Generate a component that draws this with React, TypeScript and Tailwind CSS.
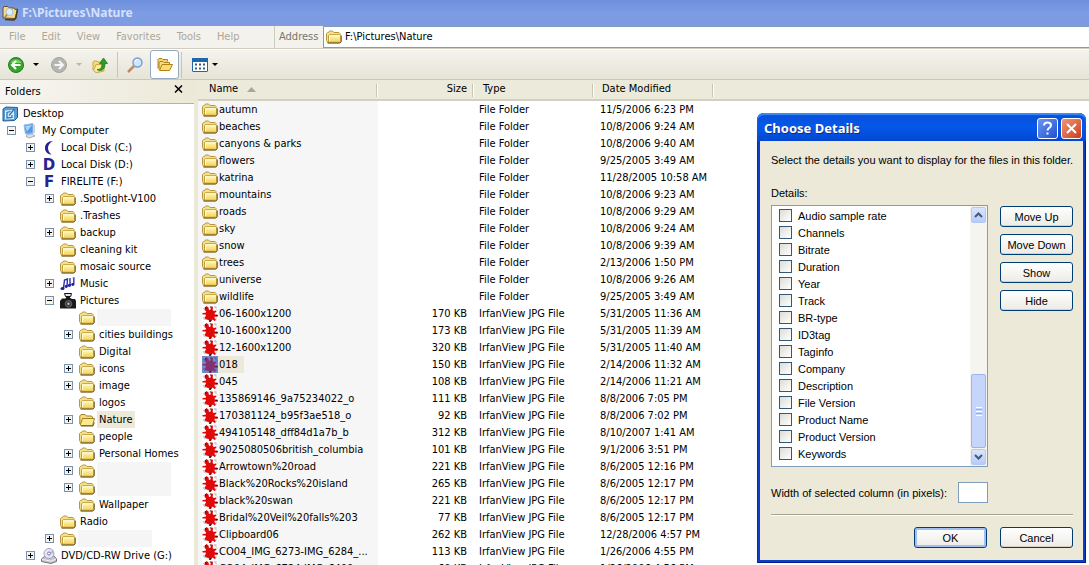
import React from 'react';

interface FileRow {
  name: string;
  size?: string;
  date: string;
  selected?: boolean;
}

interface TreeNode {
  label?: string;
  icon: React.ReactNode;
  state?: 'open' | 'closed';
  selected?: boolean;
  children?: TreeNode[];
}

const FolderIcon = () => (
  <svg width="16" height="16" viewBox="0 0 16 16" className="shrink-0" aria-hidden="true">
    <defs>
      <linearGradient id="folderFill" x1="0" y1="0" x2="0" y2="1">
        <stop offset="0" stopColor="#fffbb8" />
        <stop offset="1" stopColor="#f5d05a" />
      </linearGradient>
    </defs>
    <path d="M.5 11.5v-7l1-1h1l1-1.500h3l1.500 1.500h5l1 1v2l.5.500v6l-1.500 1h-11z" fill="#f3e08c" stroke="#b8963c" />
    <path d="M2.500 13V6.500l.8-.8h10.400l.8.800V12.500l-.8.800H2.500z" fill="url(#folderFill)" stroke="#c09c3a" />
    <path d="M1.500 14h12.500l1.300-1.200V6.500" fill="none" stroke="#75602a" />
    <path d="M3.500 12V6.800h10" fill="none" stroke="#fffde0" />
  </svg>
);

const OpenFolderIcon = () => (
  <svg width="16" height="16" viewBox="0 0 16 16" className="shrink-0" aria-hidden="true">
    <path d="M.8 12V4L2 2.500h4L7.500 4h5l1 1v3" fill="#f4dc7e" stroke="#a37f22" />
    <path d="M1.200 13L3.500 6.500h12L13.500 13.500H2z" fill="#fbe98f" stroke="#a37f22" />
    <path d="M2 14h12l1.300-3.500" fill="none" stroke="#6f5a23" />
  </svg>
);

const SplatIcon = ({ selected }: { selected?: boolean }) => (
  <svg width="16" height="17" viewBox="0 0 16 17" className={selected ? 'shrink-0 bg-[#7389c8]' : 'shrink-0 bg-white'} aria-hidden="true">
    <path d="M12 2h2v2M1 4l1.500-1M1 12l2 3M2 14h2M12 14.500h2v-2M14.500 5h1" fill="none" stroke={selected ? '#566bb0' : '#c9c9cc'} strokeWidth="1.300" />
    <path
      d="M3 2.500L4.500 1l2 1.500.5 2.500 1.500-.5.500-3 2 .2-.3 3.300 1 1 2.300-.5.500 1.500-2 1 .5 1.500 3 .5-.2 1.500-3.300.3.200 1.700 1.300 1.500-1.500 1-2-1.500-1.500 2-.3 1.500-1.700-.2-.2-2.800-1.600-.3L3.500 14l-1-1.200 1.500-2.300-.5-1L.5 9.500V8l3-.2.700-1.300L2.500 5z"
      fill={selected ? '#84316f' : '#e10a0a'}
    />
    <path d="M3 2.500l1.500 1M8.500 1.500v1M13.500 10.500h2M8.500 15v1.500" stroke={selected ? '#4a2458' : '#5a0808'} strokeWidth="1.400" />
  </svg>
);

const DesktopIcon = () => (
  <svg width="16" height="16" viewBox="0 0 16 16" className="shrink-0" aria-hidden="true">
    <path d="M1 3l3-2 11.500.5v10l-3 3-11.500.5z" fill="#5a9dd2" stroke="#1f5c94" />
    <path d="M3 4.500l9-.5v9L3 13.500z" fill="#d8edfb" />
    <path d="M8.500 5.500L5 6.500V12l5-.5V9M7 9.500L12.500 3" fill="none" stroke="#2d74b4" strokeWidth="1.300" />
  </svg>
);

const ComputerIcon = () => (
  <svg width="16" height="16" viewBox="0 0 16 16" className="shrink-0" aria-hidden="true">
    <path d="M2 2l9-1.500V10l-7.500 1z" fill="#4f9bea" stroke="#9cbde3" />
    <path d="M3 3l7-1-5 6.500z" fill="#a5d4fb" />
    <path d="M11.500 1l1.500 1v8l-1.500 1z" fill="#c9cfd8" />
    <path d="M5 11.500l5-.7 3 2.200-6 2-3-1.500z" fill="#dbe0e8" stroke="#8791a5" strokeWidth=".7" />
  </svg>
);

const CrescentIcon = () => (
  <svg width="16" height="16" viewBox="0 0 16 16" className="shrink-0" aria-hidden="true">
    <path d="M12 1C7 1 4 4 4 8s3 6.500 6.500 6.500C8.500 13 7 11 7 8s2-5.500 5-7z" fill="#2a2290" />
  </svg>
);

const DriveLetter = ({ letter }: { letter: string }) => (
  <span className="w-4 shrink-0 text-center font-['DejaVu_Sans',sans-serif] text-[15px] leading-4 font-bold text-[#2a2290]">{letter}</span>
);

const MusicIcon = () => (
  <svg width="16" height="16" viewBox="0 0 16 16" className="shrink-0" aria-hidden="true">
    <path d="M3.500 12l1-8 3-1-.5 7M10 9V2M13.800 8V1.500" fill="none" stroke="#2a2ea8" strokeWidth="1.400" />
    <path d="M9 2.500h2M12.500 2h2" stroke="#6d70d0" />
    <g fill="#1d1f9b">
      <ellipse cx="2.500" cy="12.500" rx="2" ry="1.600" />
      <ellipse cx="6.200" cy="10.500" rx="1.600" ry="1.400" />
      <ellipse cx="9.400" cy="9.500" rx="1.600" ry="1.400" />
      <ellipse cx="12.800" cy="8.500" rx="1.600" ry="1.400" />
    </g>
  </svg>
);

const CameraIcon = () => (
  <svg width="16" height="16" viewBox="0 0 16 16" className="shrink-0" aria-hidden="true">
    <path d="M4.500.5h7l-.8 3H5.500z" fill="#dfe5ea" stroke="#111" />
    <path d="M6 3.500h4V6H6z" fill="#1a1a1a" />
    <path d="M0 8l2-2.500h3L6.500 5h4l1.500 1h3l1 2V15.500H0z" fill="#1a1a1a" />
    <circle cx="8.500" cy="10.800" r="3.300" fill="#3c3c3c" stroke="#777" strokeWidth=".8" />
    <circle cx="8.500" cy="10.800" r="1.200" fill="#b9c0c6" />
  </svg>
);

const DiscIcon = () => (
  <svg width="16" height="16" viewBox="0 0 16 16" className="shrink-0" aria-hidden="true">
    <path d="M.5 11L4 8h9l2.500 3v2.500L10 15.500l-9.500-2z" fill="#c2c5cc" stroke="#70757f" />
    <path d="M1 11.500l9 1.500 5-2" fill="none" stroke="#f1f2f5" />
    <circle cx="8" cy="5.500" r="5" fill="#e6e6f6" stroke="#a3a3bd" />
    <path d="M8 5.500l3.500-3.500A5 5 0 0 1 13 5.500z" fill="#b8b4ee" />
    <circle cx="8" cy="5.500" r="1.500" fill="#fff" stroke="#7777a8" />
  </svg>
);

const ControlPanelIcon = () => (
  <svg width="16" height="16" viewBox="0 0 16 16" className="shrink-0" aria-hidden="true">
    <path d="M1 1l9-.5V11l-8 1z" fill="#3b87d6" stroke="#2763a5" />
  </svg>
);

const Caret = ({ muted }: { muted?: boolean }) => (
  <svg width="6" height="3" viewBox="0 0 6 3" className="shrink-0" aria-hidden="true">
    <path d="M0 0h6L3 3z" fill={muted ? '#b9b7ab' : '#000'} />
  </svg>
);

const folder = (label?: string, state?: 'open' | 'closed'): TreeNode => ({ label, state, icon: <FolderIcon /> });

const tree: TreeNode[] = [
  {
    label: 'My Computer',
    icon: <ComputerIcon />,
    state: 'open',
    children: [
      { label: 'Local Disk (C:)', icon: <CrescentIcon />, state: 'closed' },
      { label: 'Local Disk (D:)', icon: <DriveLetter letter="D" />, state: 'closed' },
      {
        label: 'FIRELITE (F:)',
        icon: <DriveLetter letter="F" />,
        state: 'open',
        children: [
          folder('.Spotlight-V100', 'closed'),
          folder('.Trashes'),
          folder('backup', 'closed'),
          folder('cleaning kit'),
          folder('mosaic source'),
          { label: 'Music', icon: <MusicIcon />, state: 'closed' },
          {
            label: 'Pictures',
            icon: <CameraIcon />,
            state: 'open',
            children: [
              folder(),
              folder('cities buildings', 'closed'),
              folder('Digital'),
              folder('icons', 'closed'),
              folder('image', 'closed'),
              folder('logos'),
              { label: 'Nature', icon: <OpenFolderIcon />, state: 'closed', selected: true },
              folder('people'),
              folder('Personal Homes', 'closed'),
              folder(undefined, 'closed'),
              folder(undefined, 'closed'),
              folder('Wallpaper'),
            ],
          },
          folder('Radio'),
          folder(undefined, 'closed'),
        ],
      },
      { label: 'DVD/CD-RW Drive (G:)', icon: <DiscIcon />, state: 'closed' },
      { label: 'Control Panel', icon: <ControlPanelIcon />, state: 'closed' },
    ],
  },
];

const files: FileRow[] = [
  { name: 'autumn', date: '11/5/2006 6:23 PM' },
  { name: 'beaches', date: '10/8/2006 9:24 AM' },
  { name: 'canyons & parks', date: '10/8/2006 9:40 AM' },
  { name: 'flowers', date: '9/25/2005 3:49 AM' },
  { name: 'katrina', date: '11/28/2005 10:58 AM' },
  { name: 'mountains', date: '10/8/2006 9:23 AM' },
  { name: 'roads', date: '10/8/2006 9:29 AM' },
  { name: 'sky', date: '10/8/2006 9:24 AM' },
  { name: 'snow', date: '10/8/2006 9:39 AM' },
  { name: 'trees', date: '2/13/2006 1:50 PM' },
  { name: 'universe', date: '10/8/2006 9:26 AM' },
  { name: 'wildlife', date: '9/25/2005 3:49 AM' },
  { name: '06-1600x1200', size: '170 KB', date: '5/31/2005 11:36 AM' },
  { name: '10-1600x1200', size: '173 KB', date: '5/31/2005 11:39 AM' },
  { name: '12-1600x1200', size: '320 KB', date: '5/31/2005 11:40 AM' },
  { name: '018', size: '150 KB', date: '2/14/2006 11:32 AM', selected: true },
  { name: '045', size: '108 KB', date: '2/14/2006 11:21 AM' },
  { name: '135869146_9a75234022_o', size: '111 KB', date: '8/8/2006 7:05 PM' },
  { name: '170381124_b95f3ae518_o', size: '92 KB', date: '8/8/2006 7:02 PM' },
  { name: '494105148_dff84d1a7b_b', size: '312 KB', date: '8/10/2007 1:41 AM' },
  { name: '9025080506british_columbia', size: '101 KB', date: '9/1/2006 3:51 PM' },
  { name: 'Arrowtown%20road', size: '221 KB', date: '8/6/2005 12:16 PM' },
  { name: 'Black%20Rocks%20island', size: '265 KB', date: '8/6/2005 12:17 PM' },
  { name: 'black%20swan', size: '221 KB', date: '8/6/2005 12:17 PM' },
  { name: 'Bridal%20Veil%20falls%203', size: '77 KB', date: '8/6/2005 12:17 PM' },
  { name: 'Clipboard06', size: '262 KB', date: '12/28/2006 4:57 PM' },
  { name: 'CO04_IMG_6273-IMG_6284_...', size: '113 KB', date: '1/26/2006 4:55 PM' },
  { name: 'CO04_IMG_6724-IMG_6400...', size: '60 KB', date: '1/26/2006 4:56 PM' },
];

const details = [
  'Audio sample rate', 'Channels', 'Bitrate', 'Duration', 'Year', 'Track', 'BR-type', 'ID3tag',
  'Taginfo', 'Company', 'Description', 'File Version', 'Product Name', 'Product Version', 'Keywords',
];

const menus = ['File', 'Edit', 'View', 'Favorites', 'Tools', 'Help'];

const Expander = ({ state }: { state: 'open' | 'closed' }) => (
  <button aria-label={state === 'open' ? 'Collapse' : 'Expand'} className="block size-[9px]">
    <svg width="9" height="9" viewBox="0 0 9 9" shapeRendering="crispEdges">
      <rect x=".5" y=".5" width="8" height="8" fill="#f3f2ee" stroke="#7b92ad" />
      <path d={state === 'open' ? 'M2 4.5h5' : 'M2 4.5h5M4.5 2v5'} stroke="#000" />
    </svg>
  </button>
);

const TreeList = ({ nodes }: { nodes: TreeNode[] }) => (
  <ul>
    {nodes.map((node, i) => (
      <li key={i}>
        <div className="flex h-[17px] items-center">
          <span className="mr-[6px] w-[9px] shrink-0">{node.state && <Expander state={node.state} />}</span>
          {node.icon}
          {node.label ? (
            <span className={`ml-[2px] px-[2px] leading-[17px] whitespace-nowrap ${node.selected ? 'bg-[#ece9d8]' : ''}`}>{node.label}</span>
          ) : (
            <span className="ml-[2px] w-[74px] self-stretch bg-[#f5f5f5]" />
          )}
        </div>
        {node.children && (
          <div className="pl-[19px]">
            <TreeList nodes={node.children} />
          </div>
        )}
      </li>
    ))}
  </ul>
);

const DialogButton = ({ children, primary }: { children: React.ReactNode; primary?: boolean }) => (
  <button
    className={`h-[21px] w-[73px] rounded-[3px] border border-[#003c74] bg-linear-to-b from-white to-[#ecebe5] leading-[18px] ${
      primary ? 'shadow-[inset_0_0_0_2px_#a3bff0]' : 'shadow-[inset_0_-1px_0_#d6d0c5]'
    }`}
  >
    {children}
  </button>
);

const ScrollButton = ({ dir }: { dir: 'up' | 'down' }) => (
  <button aria-label={`Scroll ${dir}`} className="flex h-4 items-center justify-center rounded-[2px] border border-[#b4c8f6] bg-linear-to-b from-[#dbe5fd] to-[#b7cbf8]">
    <svg width="9" height="6" viewBox="0 0 9 6">
      <path d={dir === 'up' ? 'M1 5l3.500-3.500L8 5' : 'M1 1l3.500 3.500L8 1'} fill="none" stroke="#42577e" strokeWidth="2" />
    </svg>
  </button>
);

const ChooseDetails = () => (
  <section
    role="dialog"
    aria-labelledby="dialog-title"
    className="absolute top-[113px] right-[3px] w-[329px] rounded-t-[7px] bg-[#0c3fc4] px-[3px] pb-[3px] font-['Liberation_Sans',Arial,sans-serif] shadow-[inset_1px_0_0_#0a2fa0,inset_-1px_-1px_0_#001c8c]"
  >
    <header className="-mx-[3px] flex h-[28px] items-center gap-[3px] rounded-t-[7px] bg-linear-to-b from-[#0a4fd8] via-[#0458ea] to-[#0347d0] pr-1 pl-[7px] shadow-[inset_0_2px_1px_#3c8cf5]">
      <h2 id="dialog-title" className="flex-1 pt-1 font-['Noto_Sans',sans-serif] text-[13px] font-bold text-white [text-shadow:1px_1px_0_#0f2c86]">
        Choose Details
      </h2>
      <button aria-label="Help" className="mt-[2px] flex size-[21px] items-center justify-center rounded-[3px] border border-white bg-linear-to-br from-[#6f96f0] to-[#1c4fd2]">
        <svg width="13" height="15" viewBox="0 0 13 15">
          <path d="M3 4.500C3 2.500 4.500 1.500 6.500 1.500s3.500 1 3.500 3-3.500 2.500-3.500 5M6.500 11.500v2" fill="none" stroke="#fff" strokeWidth="2" />
        </svg>
      </button>
      <button aria-label="Close" className="mt-[2px] flex size-[21px] items-center justify-center rounded-[3px] border border-white bg-linear-to-br from-[#ee9478] to-[#cc3a12]">
        <svg width="13" height="13" viewBox="0 0 13 13">
          <path d="M2 2l9 9M11 2l-9 9" stroke="#fff" strokeWidth="2" />
        </svg>
      </button>
    </header>
    <div className="bg-[#ece9d8] pt-3 pr-[10px] pb-3 pl-[11px] leading-[14px]">
      <p className="whitespace-nowrap">Select the details you want to display for the files in this folder.</p>
      <p id="details-label" className="mt-[19px]">Details:</p>
      <div className="mt-[5px] flex gap-3">
        <div className="flex h-[262px] flex-1 border border-[#7f9db9] bg-white">
          <ul aria-labelledby="details-label" className="flex-1 overflow-hidden pt-px pl-[7px]">
            {details.map((d) => (
              <li key={d}>
                <label className="flex h-[17px] items-center gap-[6px]">
                  <input
                    type="checkbox"
                    className="size-[13px] appearance-none border border-[#34587a] bg-linear-to-br from-[#dcdcd7] to-white"
                  />
                  {d}
                </label>
              </li>
            ))}
          </ul>
          <div className="flex w-[17px] flex-col bg-[#f5f4ee] p-px">
            <ScrollButton dir="up" />
            <span className="flex-1" />
            <span className="mb-px flex h-[74px] flex-col items-center justify-center gap-px rounded-[2px] border border-[#9ab4ee] bg-[#c5d5fb]">
              <span className="h-px w-[6px] bg-white" />
              <span className="h-px w-[6px] bg-[#8cb0f8]" />
              <span className="h-px w-[6px] bg-white" />
              <span className="h-px w-[6px] bg-[#8cb0f8]" />
              <span className="h-px w-[6px] bg-white" />
            </span>
            <ScrollButton dir="down" />
          </div>
        </div>
        <div className="flex flex-col gap-[7px] pt-px">
          <DialogButton>Move Up</DialogButton>
          <DialogButton>Move Down</DialogButton>
          <DialogButton>Show</DialogButton>
          <DialogButton>Hide</DialogButton>
        </div>
      </div>
      <div className="mt-[15px] mr-[85px] flex items-center justify-between">
        <label htmlFor="col-width">Width of selected column (in pixels):</label>
        <input id="col-width" type="text" className="h-[21px] w-[30px] border border-[#7f9db9] bg-white px-1" />
      </div>
      <hr className="mt-[11px] h-[2px] border-t border-b border-t-[#a5a294] border-b-white" />
      <div className="mt-[11px] flex justify-end gap-[13px]">
        <DialogButton primary>OK</DialogButton>
        <DialogButton>Cancel</DialogButton>
      </div>
    </div>
  </section>
);

const MainToolbar = () => (
  <div className="flex h-[30px] shrink-0 items-center border-t border-white bg-linear-to-b from-[#f4f3ee] to-[#e6e4d6] pl-2">
    <button aria-label="Back">
      <svg width="16" height="16" viewBox="0 0 16 16">
        <circle cx="8" cy="8" r="7.500" fill="#35a52c" stroke="#1f7d1c" />
        <path d="M2.500 6A6 6 0 0 1 13.500 6z" fill="#7ad06c" />
        <path d="M12.500 8H4.500M8 4L4 8l4 4" fill="none" stroke="#fff" strokeWidth="2" />
      </svg>
    </button>
    <button aria-label="Back history" className="ml-[9px]"><Caret /></button>
    <button aria-label="Forward" className="ml-3">
      <svg width="16" height="16" viewBox="0 0 16 16">
        <circle cx="8" cy="8" r="7.500" fill="#b5b5b2" stroke="#a3a3a0" />
        <path d="M3.500 8h8M8 4l4 4-4 4" fill="none" stroke="#f5f5f3" strokeWidth="2" />
      </svg>
    </button>
    <button aria-label="Forward history" className="ml-[9px]"><Caret muted /></button>
    <button aria-label="Up" className="ml-[10px]">
      <svg width="16" height="16" viewBox="0 0 16 16">
        <path d="M1 5l1-1h3l1 1 6 .5V14l-8 1.500L1 13z" fill="#f4dc73" stroke="#c9a94b" />
        <path d="M1.500 13.500L4 7.500h7L9.500 14.500l-5.500 1z" fill="#fbec9a" stroke="#c9a94b" />
        <path d="M5 12.500c4 0 5-2 5-6H7.500L11.500 1l4 5.500H13c0 5-2 7-6 7z" fill="#2f9e26" stroke="#1d7a17" strokeWidth=".8" />
      </svg>
    </button>
    <span className="ml-[9px] h-[26px] w-px bg-[#c8c5b5]" />
    <button aria-label="Search" className="ml-[9px]">
      <svg width="16" height="16" viewBox="0 0 16 16">
        <path d="M7 9l-6 6" stroke="#c08a66" strokeWidth="2.500" />
        <circle cx="10.500" cy="5.500" r="4.500" fill="#cfe6fb" stroke="#7a9cc8" strokeWidth="1.400" />
        <path d="M8 4.500a3 3 0 0 1 3-2" fill="none" stroke="#fff" />
      </svg>
    </button>
    <button aria-label="Folders" aria-pressed="true" className="ml-[7px] flex h-[29px] w-[29px] items-center justify-center rounded-[3px] border border-[#92a9c3] bg-white">
      <svg width="16" height="16" viewBox="0 0 16 16">
        <path d="M1 11.500V2.500l1-1h3l1 1h4.500v2" fill="#f3d46b" stroke="#b0821b" />
        <path d="M2 12.500V6l1-1.500h3l1 1h5.500v2" fill="#f7dd7c" stroke="#b0821b" />
        <path d="M2.500 13.500l2.500-6h10.500l-3 6z" fill="#fcdc6d" stroke="#b0821b" />
      </svg>
    </button>
    <span className="ml-[2px] h-[26px] w-px bg-[#c8c5b5]" />
    <button aria-label="Views" className="ml-[10px] flex items-center gap-1">
      <svg width="16" height="14" viewBox="0 0 16 14">
        <rect x=".5" y=".5" width="15" height="13" rx=".5" fill="#fff" stroke="#1d67ae" />
        <path d="M0 2h16" stroke="#1d67ae" strokeWidth="4" />
        <path d="M3 6.500h2M7 6.500h2M11 6.500h2M3 10.500h2M7 10.500h2M11 10.500h2" stroke="#3c5a78" strokeWidth="2" />
      </svg>
      <Caret />
    </button>
  </div>
);

const th = 'relative h-[21px] border-b-2 border-[#d3d0c1] bg-[#ebeadb] p-0 text-left font-normal';
const divider = <span className="absolute top-[4px] right-0 h-[13px] w-[2px] border-r border-l border-r-white border-l-[#c7c5b2]" />;

export default function App() {
  return (
    <div className="relative flex h-screen flex-col overflow-hidden bg-white font-['DejaVu_Sans_Condensed','DejaVu_Sans',sans-serif] text-[11px] text-black">
      <header className="flex h-[26px] shrink-0 items-center gap-1 bg-linear-to-b from-[#6e8fdc] via-[#7c9ce4] to-[#7f9be2] pl-[2px]">
        <svg width="16" height="16" viewBox="0 0 16 16" className="shrink-0" aria-hidden="true">
          <path d="M1 13V3l1-1.500h4L7.500 3H12l1 1.500L15.500 4 13 13.500z" fill="#f2dc8a" stroke="#6a5221" />
          <path d="M15.500 4L14 13l-2 2-9-.5" fill="none" stroke="#4a3b1c" strokeWidth="1.400" />
          <circle cx="7.500" cy="7" r="3.500" fill="#dcefff" stroke="#a9bfd6" />
          <path d="M5 9.500L2.500 13" stroke="#b08050" strokeWidth="1.600" />
        </svg>
        <h1 className="font-['Noto_Sans',sans-serif] text-[12px] font-bold text-[#d5e1fb]">F:\Pictures\Nature</h1>
      </header>

      <div className="flex h-[23px] shrink-0 items-stretch border-b border-[#d0cdbf] bg-[#f3f2ed]">
        <nav className="flex w-[275px] items-center gap-4 border-r border-[#cfccbd] pl-[9px] text-[#aca899]">
          {menus.map((m) => (
            <button key={m}>{m}</button>
          ))}
        </nav>
        <label htmlFor="address" className="w-[48px] self-center pl-1 text-[#77756b]">Address</label>
        <div className="flex flex-1 items-center gap-[3px] border border-r-0 border-[#7f9db9] bg-white pl-[2px]">
          <FolderIcon />
          <input id="address" type="text" defaultValue="F:\Pictures\Nature" className="min-w-0 flex-1 pt-px outline-none" />
        </div>
      </div>

      <MainToolbar />

      <div className="flex min-h-0 flex-1 border-t border-[#cbc8b8]">
        <aside className="flex w-[194px] shrink-0 flex-col overflow-hidden">
          <div className="flex h-[24px] shrink-0 items-center justify-between border-b border-[#b5b2a4] bg-linear-to-r from-[#f6f5f1] to-[#ece9d8] pr-[11px] pl-[5px]">
            <h2 className="pt-px">Folders</h2>
            <button aria-label="Close folders" className="mb-[6px]">
              <svg width="9" height="8" viewBox="0 0 9 8">
                <path d="M1 .5l7 7M8 .5l-7 7" stroke="#000" strokeWidth="1.500" />
              </svg>
            </button>
          </div>
          <div className="pt-px pl-[2px]">
            <div className="flex h-[17px] items-center">
              <DesktopIcon />
              <span className="ml-[3px] px-[2px] leading-[17px]">Desktop</span>
            </div>
            <div className="pl-[5px]">
              <TreeList nodes={tree} />
            </div>
          </div>
        </aside>
        <div className="w-1 shrink-0 bg-[#ece9d8]" />
        <main className="min-w-0 flex-1 overflow-hidden">
          <table className="w-full table-fixed border-separate border-spacing-0">
            <thead>
              <tr>
                <th className={`${th} w-[180px]`}>
                  <span className="flex items-center gap-[9px] pl-[11px]">
                    Name
                    <svg width="9" height="5" viewBox="0 0 9 5" aria-hidden="true">
                      <path d="M4.500 0L9 5H0z" fill="#aca899" />
                    </svg>
                  </span>
                  {divider}
                </th>
                <th className={`${th} w-[96px]`}>
                  <span className="block pr-[7px] text-right">Size</span>
                  {divider}
                </th>
                <th className={`${th} w-[120px]`}>
                  <span className="pl-[9px]">Type</span>
                  {divider}
                </th>
                <th className={`${th} w-[120px]`}>
                  <span className="pl-2">Date Modified</span>
                  {divider}
                </th>
                <th className={th} aria-hidden="true" />
              </tr>
            </thead>
            <tbody>
              {files.map((f) => (
                <tr key={f.name} className="h-[17px] leading-[17px] whitespace-nowrap">
                  <td className="bg-[#f6f6f6] p-0 pl-1">
                    <span className="flex h-[17px] items-center">
                      {f.size ? <SplatIcon selected={f.selected} /> : <FolderIcon />}
                      <span className={f.selected ? 'bg-[#ece9d8] pr-[6px] pl-px' : 'pl-px'}>{f.name}</span>
                    </span>
                  </td>
                  <td className="p-0 pr-[7px] text-right">{f.size}</td>
                  <td className="p-0 pl-[5px]">{f.size ? 'IrfanView JPG File' : 'File Folder'}</td>
                  <td className="p-0 pl-[6px]">{f.date}</td>
                  <td className="p-0" />
                </tr>
              ))}
            </tbody>
          </table>
        </main>
      </div>

      <ChooseDetails />
    </div>
  );
}
